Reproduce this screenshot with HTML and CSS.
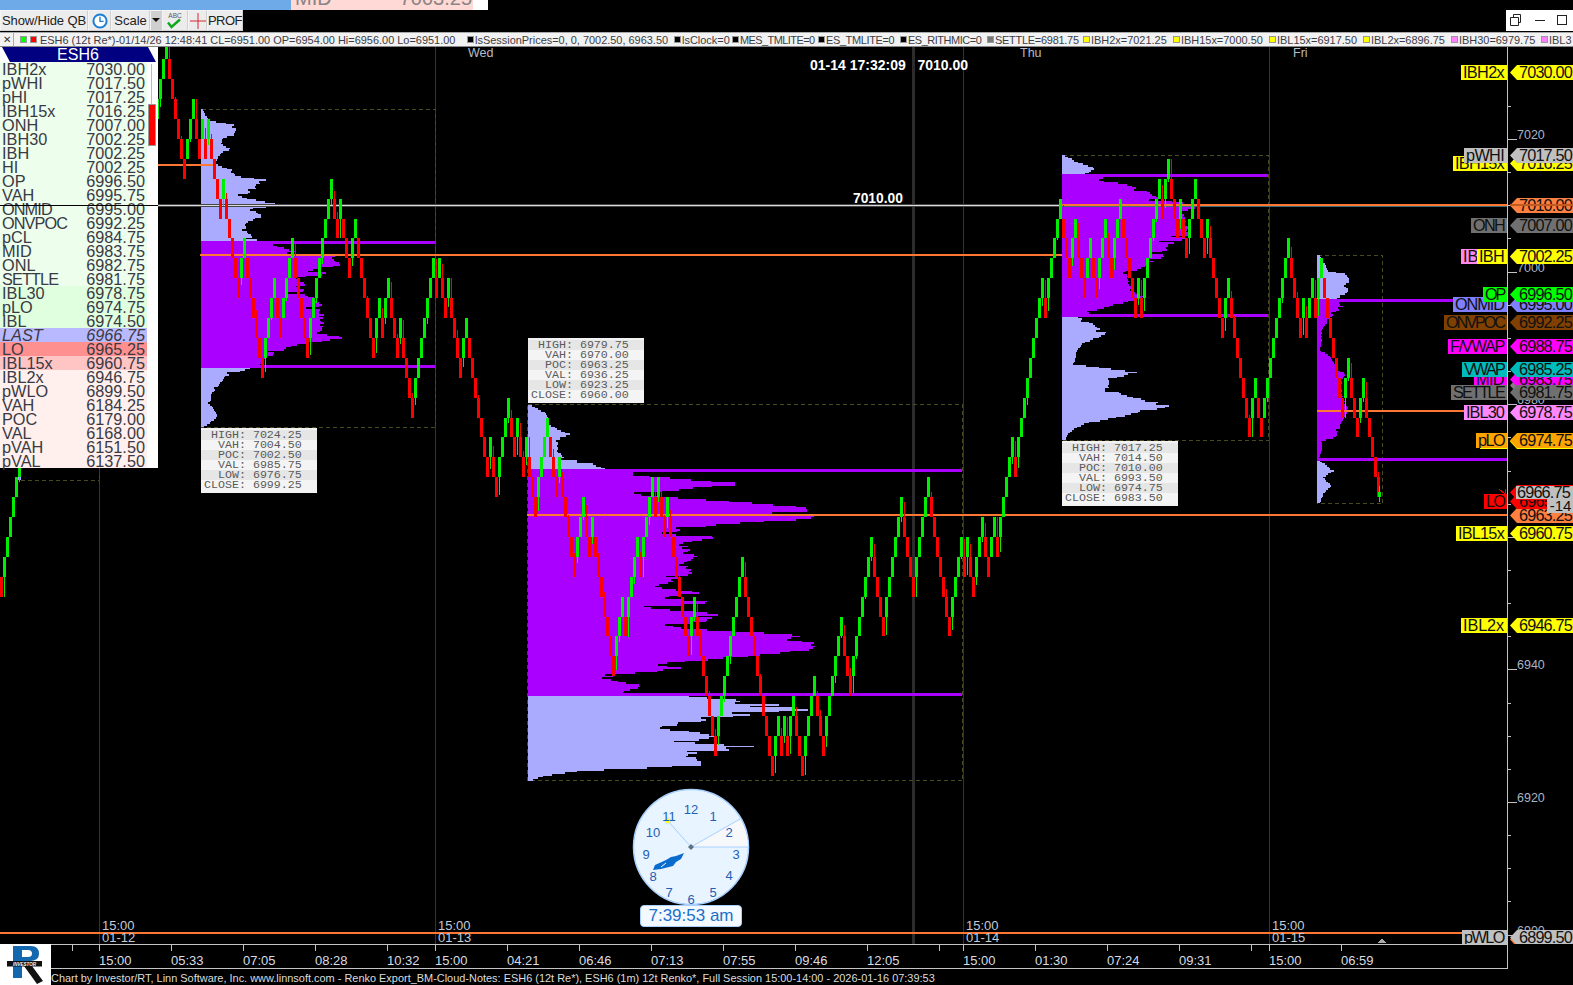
FILE: index.html
```html
<!DOCTYPE html>
<html lang="en">
<head>
<meta charset="utf-8">
<title>ESH6 Renko chart</title>
<link rel="stylesheet" href="styles.css">
</head>
<body>
<div class="page">
  <div class="top-strip">
    <div class="strip-blue"></div>
    <div class="strip-quote"><span>MID</span><span>7003.25</span></div>
    <div class="strip-end"></div>
  </div>
  <div class="toolbar-row">
    <div class="toolbar">
      <button class="tb tb-show">Show/Hide QB</button>
      <button class="tb tb-clock" aria-label="clock">
        <svg width="16" height="16" viewBox="0 0 16 16"><circle cx="8" cy="8" r="6.600" fill="#fff" stroke="#1c7fd6" stroke-width="2"/><path d="M8 3.800V8.400H11.600" fill="none" stroke="#1c7fd6" stroke-width="1.400"/></svg>
      </button>
      <button class="tb tb-scale">Scale</button>
      <button class="tb tb-drop" aria-label="scale menu"><svg width="8" height="5" viewBox="0 0 8 5"><path d="M0 0H8L4 4Z" fill="#111"/></svg></button>
      <button class="tb tb-abc" aria-label="ABC"><svg width="18" height="18" viewBox="0 0 18 18"><text x="9" y="6" class="abc-text">ABC</text><path d="M2 10.500L5.500 15L14 7.500" fill="none" stroke="#0fa81a" stroke-width="2.400"/></svg></button>
      <button class="tb tb-cross" aria-label="cross"><svg width="16" height="16" viewBox="0 0 16 16"><path d="M0 8H16M8 0V16" stroke="#d8262c" stroke-width="1"/></svg></button>
      <button class="tb tb-prof">PROF</button>
    </div>
    <div class="win-buttons">
      <svg width="67" height="21" viewBox="0 0 67 21"><path d="M4.500 7.500H12.500V15.500H4.500ZM7.500 7.500V4.500H14.500V12.500H12.500" fill="none" stroke="#222"/><path d="M29 10.500H39" stroke="#222"/><rect x="51.500" y="5.500" width="9" height="9" fill="none" stroke="#222"/></svg>
    </div>
  </div>
  <div class="info-bar" id="infoBar">
    <span class="close-x">✕</span>
    <span class="sw sw-green"></span><span class="sw sw-red"></span>
    <span class="it it-main">ESH6 (12t Re*)-01/14/26 12:48:41 CL=6951.00 OP=6954.00 Hi=6956.00 Lo=6951.00</span>
    <span class="sw sw-black"></span><span class="it it-a">lsSessionPrices=0, 0, 7002.50, 6963.50</span>
    <span class="sw sw-black"></span><span class="it it-b">lsClock=0</span>
    <span class="sw sw-black"></span><span class="it it-c">MES_TMLITE=0</span>
    <span class="sw sw-black"></span><span class="it it-d">ES_TMLITE=0</span>
    <span class="sw sw-black"></span><span class="it it-e">ES_RITHMIC=0</span>
    <span class="sw sw-gray"></span><span class="it it-f">SETTLE=6981.75</span>
    <span class="sw sw-yellow"></span><span class="it it-g">IBH2x=7021.25</span>
    <span class="sw sw-yellow"></span><span class="it it-h">IBH15x=7000.50</span>
    <span class="sw sw-yellow"></span><span class="it it-i">IBL15x=6917.50</span>
    <span class="sw sw-yellow"></span><span class="it it-j">IBL2x=6896.75</span>
    <span class="sw sw-pink"></span><span class="it it-k">IBH30=6979.75</span>
    <span class="sw sw-pink"></span><span class="it">IBL3</span>
  </div>

  <div class="main">
    <div class="chart" id="chartBox">
      <svg class="chart-svg" id="chart" width="1507" height="897" viewBox="0 47 1507 897"></svg>

      <div class="panel">
        <div class="panel-title">ESH6</div>
        <div class="panel-body">
          <div class="rows">
            <div class="row r-a"><span>IBH2x</span><span>7030.00</span></div>
            <div class="row r-a"><span>pWHI</span><span>7017.50</span></div>
            <div class="row r-a"><span>pHI</span><span>7017.25</span></div>
            <div class="row r-a"><span>IBH15x</span><span>7016.25</span></div>
            <div class="row r-a"><span>ONH</span><span>7007.00</span></div>
            <div class="row r-a"><span>IBH30</span><span>7002.25</span></div>
            <div class="row r-a"><span>IBH</span><span>7002.25</span></div>
            <div class="row r-a"><span>HI</span><span>7002.25</span></div>
            <div class="row r-a"><span>OP</span><span>6996.50</span></div>
            <div class="row r-a"><span>VAH</span><span>6995.75</span></div>
            <div class="row r-a"><span class="tight">ONMID</span><span>6995.00</span></div>
            <div class="row r-a"><span class="tight">ONVPOC</span><span>6992.25</span></div>
            <div class="row r-a"><span>pCL</span><span>6984.75</span></div>
            <div class="row r-a"><span>MID</span><span>6983.75</span></div>
            <div class="row r-a"><span>ONL</span><span>6982.75</span></div>
            <div class="row r-a"><span class="tight">SETTLE</span><span>6981.75</span></div>
            <div class="row r-b"><span>IBL30</span><span>6978.75</span></div>
            <div class="row r-b"><span>pLO</span><span>6974.75</span></div>
            <div class="row r-b"><span>IBL</span><span>6974.50</span></div>
            <div class="row r-last"><span>LAST</span><span>6966.75</span></div>
            <div class="row r-lo"><span>LO</span><span>6965.25</span></div>
            <div class="row r-i15"><span>IBL15x</span><span>6960.75</span></div>
            <div class="row r-c"><span>IBL2x</span><span>6946.75</span></div>
            <div class="row r-c"><span>pWLO</span><span>6899.50</span></div>
            <div class="row r-c"><span>VAH</span><span>6184.25</span></div>
            <div class="row r-c"><span>POC</span><span>6179.00</span></div>
            <div class="row r-c"><span>VAL</span><span>6168.00</span></div>
            <div class="row r-c"><span>pVAH</span><span>6151.50</span></div>
            <div class="row r-c"><span>pVAL</span><span>6137.50</span></div>
          </div>
          <div class="range-col"><div class="range-line"></div><div class="range-bar"></div></div>
        </div>
        <div class="panel-strike"></div>
      </div>

      <div class="stat-box box-a">
        <div> HIGH: 7024.25</div><div>  VAH: 7004.50</div><div>  POC: 7002.50</div><div>  VAL: 6985.75</div><div>  LOW: 6976.75</div><div>CLOSE: 6999.25</div>
      </div>
      <div class="stat-box box-b">
        <div> HIGH: 6979.75</div><div>  VAH: 6970.00</div><div>  POC: 6963.25</div><div>  VAL: 6936.25</div><div>  LOW: 6923.25</div><div>CLOSE: 6960.00</div>
      </div>
      <div class="stat-box box-c">
        <div> HIGH: 7017.25</div><div>  VAH: 7014.50</div><div>  POC: 7010.00</div><div>  VAL: 6993.50</div><div>  LOW: 6974.75</div><div>CLOSE: 6983.50</div>
      </div>

      <div class="day day-wed">Wed</div>
      <div class="day day-thu">Thu</div>
      <div class="day day-fri">Fri</div>
      <div class="cursor-label">01-14 17:32:09&nbsp;&nbsp;&nbsp;7010.00</div>
      <div class="line-label">7010.00</div>

      <div class="clock">
        <svg width="120" height="120" viewBox="0 0 120 120">
          <circle cx="60" cy="60" r="57.500" fill="#e8f4ff" stroke="#a8d0ff" stroke-width="1.500"/>
          <path d="M60 60L109 32A57 57 0 0 1 117 60Z" fill="#f7f8f9"/>
          <path d="M60 60H117.500M60 60L109 32M60 60L37 34" stroke="#a8d0ff" stroke-width="1" fill="none"/>
          <circle cx="37" cy="34" r="3" fill="#ffff33" stroke="#cfe4ff"/>
          <g class="clock-nums">
            <text x="60" y="27">12</text><text x="82" y="34">1</text><text x="98" y="50">2</text><text x="105" y="72">3</text>
            <text x="98" y="93">4</text><text x="82" y="110">5</text><text x="60" y="117">6</text><text x="38" y="110">7</text>
            <text x="22" y="94">8</text><text x="15" y="72">9</text><text x="22" y="50">10</text><text x="38" y="34">11</text>
          </g>
          <path d="M53 66L45 69L40 70L35 73L24 78L22 83L30 82L38 80L42 79L45 75L50 72Z" fill="#0a6ccc"/>
          <path d="M30 80L35 76" stroke="#fff" stroke-width="1"/>
          <path d="M60 57L63 60L60 63L57 60Z" fill="#5b7288"/>
        </svg>
        <div class="clock-time">7:39:53 am</div>
      </div>
    </div>
    <div class="axis" id="axis"></div>
  </div>

  <div class="bottom">
    <div class="logo">
      <svg width="51" height="40" viewBox="0 0 51 40">
        <path fill-rule="evenodd" d="M13 1H31Q39 1 39 9Q39 15 31 16H22V33H13ZM22 5V12H28Q32 12 32 8.500Q32 5 28 5Z" fill="#1468b0"/>
        <path d="M24 21H32L43 36L37 39Z" fill="#111"/>
        <rect x="7" y="16" width="35" height="5.500" fill="#111"/>
        <text x="24.500" y="20.500" class="logo-text">INVESTOR</text>
      </svg>
    </div>
    <div class="bottom-main">
      <div class="time-axis" id="timeAxis"></div>
      <div class="footer-text">Chart by Investor/RT, Linn Software, Inc. www.linnsoft.com - Renko Export_BM-Cloud-Notes: ESH6 (12t Re*), ESH6 (1m) 12t Renko*, Full Session 15:00-14:00 - 2026-01-16 07:39:53</div>
    </div>
  </div>
</div>
<script src="chart.js"></script>
</body>
</html>
```
FILE: styles.css
```css
* { box-sizing: border-box; }
html, body { margin: 0; padding: 0; background: #000; }
body { font-family: "Liberation Sans", Arial, sans-serif; }
.page { width: 1573px; height: 985px; overflow: hidden; background: #000; position: relative; }

/* top strip */
.top-strip { height: 10px; display: flex; overflow: hidden; }
.strip-blue { width: 291px; background: #6ea9e8; }
.strip-quote { width: 182px; background: #ffd9d6; color: #8a8484; font-size: 20px; line-height: 20px; display: flex; justify-content: space-between; padding: 0 1px 0 4px; }
.strip-quote span { display: block; margin-top: -12px; }
.strip-end { width: 15px; background: #fff; }

/* toolbar */
.toolbar-row { height: 22px; display: flex; justify-content: space-between; align-items: flex-start; }
.toolbar { height: 21px; display: flex; background: #e4e4e4; }
.tb { height: 21px; padding: 0; margin: 0; border: 1px solid #d0d0d0; border-top-color: #f4f4f4; border-left-color: #f4f4f4; background: #ececec; font: 13px "Liberation Sans", Arial, sans-serif; color: #222; display: flex; align-items: center; justify-content: center; white-space: nowrap; }
.tb-show { width: 88px; letter-spacing: -.1px; }
.tb-clock { width: 23px; }
.tb-scale { width: 39px; }
.tb-drop { width: 12px; background: #cfcfcf; }
.tb-abc { width: 26px; }
.tb-cross { width: 19px; }
.tb-prof { width: 36px; letter-spacing: -.5px; }
.abc-text { font: 6.500px "Liberation Sans", sans-serif; fill: #555; text-anchor: middle; }
.win-buttons { width: 67px; height: 21px; background: #fff; }
.win-buttons svg { display: block; }

/* info bar */
.info-bar { height: 15px; background: #f2f2f2; border-top: 1px solid #aaa; border-bottom: 1px solid #888; display: flex; align-items: center; white-space: nowrap; overflow: hidden; font-size: 10.950px; color: #3c3c46; line-height: 13px; }
.close-x { width: 14px; height: 13px; font-size: 10px; line-height: 13px; text-align: center; color: #333; border-right: 1px solid #aaa; margin-right: 6px; flex: none; }
.sw { width: 7px; height: 7px; flex: none; margin-right: 1px; border: 1px solid #999; }
.sw-green { background: #0f0; margin-right: 3px; }
.sw-red { background: #f00; margin-right: 3px; }
.sw-black { background: #000; }
.sw-gray { background: #777; }
.sw-yellow { background: #ff0; }
.sw-pink { background: #ff80ff; }
.it { flex: none; position: relative; top: 1px; }
.it-main { width: 427px; }
.it-a { width: 199px; }
.it-b { width: 50px; }
.it-c { width: 78px; letter-spacing: -.55px; }
.it-d { width: 74px; letter-spacing: -.35px; }
.it-e { width: 79px; letter-spacing: -.45px; }
.it-f { width: 88px; letter-spacing: -.25px; }
.it-g { width: 82px; }
.it-h { width: 88px; }
.it-i { width: 86px; }
.it-j { width: 80px; }
.it-k { width: 82px; }

/* main */
.main { height: 897px; display: flex; }
.chart { width: 1507px; height: 897px; position: relative; overflow: hidden; background: #000; }
.chart-svg { position: absolute; left: 0; top: 0; shape-rendering: crispEdges; }
.axis { width: 66px; height: 897px; position: relative; overflow: hidden; border-left: 1px solid #c4c4c4; }

/* quote board */
.panel { position: absolute; left: 0; top: 0; width: 158px; height: 421px; background: #fff; color: #3a3a44; }
.panel-title { height: 15px; background: #000080; color: #fff; font-size: 16px; line-height: 16px; text-align: center; clip-path: polygon(2px 0, 148px 0, 156px 100%, 10px 100%); padding-right: 2px; }
.panel-body { display: flex; }
.rows { width: 147px; }
.row { height: 14px; line-height: 14px; font-size: 16.300px; display: flex; justify-content: space-between; padding: 0 2px 0 2px; white-space: nowrap; }
.tight { letter-spacing: -.9px; }
.r-a { background: #edfeed; }
.r-b { background: #dfffdf; }
.r-last { background: #b9b9ff; font-style: italic; }
.r-lo { background: #ff9090; }
.r-i15 { background: #ffc4c4; }
.r-c { background: #fff0ee; }
.range-col { width: 11px; position: relative; }
.range-line { position: absolute; left: 4px; top: 2px; width: 1px; height: 82px; background: #bbb; }
.range-bar { position: absolute; left: 2px; top: 43px; width: 6px; height: 40px; background: #f00; outline: 1px solid #999; }
.panel-strike { position: absolute; left: 0; top: 158px; width: 158px; height: 1px; background: #000; }

/* stats boxes */
.stat-box { position: absolute; width: 116px; height: 65px; background: #f2f2f2; font: 11.650px/10px "Liberation Mono", monospace; color: #5a5a5a; padding-top: 2px; }
.stat-box div { height: 10px; background: #f4f4f4; white-space: pre; padding-left: 3px; }
.stat-box div:nth-child(odd) { background: #e6e6e6; }
.box-a { left: 201px; top: 381px; }
.box-b { left: 528px; top: 291px; }
.box-c { left: 1062px; top: 394px; }

.day { position: absolute; top: 0; font-size: 12.500px; line-height: 12px; color: #b5bdc9; }
.day-wed { left: 468px; }
.day-thu { left: 1020px; }
.day-fri { left: 1293px; }
.cursor-label { position: absolute; left: 810px; top: 11px; font-size: 14px; font-weight: bold; line-height: 15px; color: #fff; white-space: nowrap; }
.line-label { position: absolute; left: 853px; top: 145px; font-size: 13.800px; font-weight: bold; line-height: 14px; color: #fff; }

.date-mark { position: absolute; font-size: 13px; line-height: 12px; color: #c2ccd8; white-space: pre; }

/* clock */
.clock { position: absolute; left: 631px; top: 740px; width: 120px; height: 141px; }
.clock svg { display: block; }
.clock-nums text { font: 13px "Liberation Sans", sans-serif; fill: #1f60b4; text-anchor: middle; }
.clock-time { position: absolute; left: 9px; top: 118px; width: 102px; height: 22px; background: #f4f9ff; border: 1px solid #a8d0ff; border-radius: 4px; color: #1a70c8; font-size: 17px; line-height: 20px; text-align: center; white-space: nowrap; }

/* price axis */
.tick { position: absolute; left: 0; height: 1px; background: #c4c4c4; }
.tick-s { width: 3px; }
.tick-l { width: 9px; }
.axis-num { position: absolute; left: 9px; font-size: 12.500px; line-height: 12px; color: #a8b4c6; }
.name-tag { position: absolute; height: 15px; line-height: 15px; font-size: 16.300px; padding: 0 3px 0 2px; color: #111; white-space: nowrap; overflow: hidden; }
.price-tag { position: absolute; left: 2px; width: 64px; height: 15px; line-height: 15px; font-size: 16.300px; letter-spacing: -.85px; padding-left: 9px; color: #111; white-space: nowrap; clip-path: polygon(0 50%, 7px 0, 100% 0, 100% 100%, 7px 100%); }
.strike { position: absolute; left: 2px; width: 64px; top: 157px; height: 2px; background: #c05a20; }
.last-box { position: absolute; left: 8px; width: 58px; top: 439px; height: 13px; background: #c0c0c0; color: #111; font-size: 16.300px; line-height: 13px; letter-spacing: -.85px; padding-left: 1px; white-space: nowrap; }
.diff-box { position: absolute; left: 39px; width: 27px; top: 452px; height: 14px; background: #c0c0c0; color: #111; font-size: 15px; line-height: 14px; text-align: center; }

/* bottom */
.bottom { height: 41px; display: flex; }
.logo { width: 51px; height: 41px; background: #fff; padding-top: 1px; }
.logo svg { display: block; }
.logo-text { font: italic bold 4.500px "Liberation Sans", sans-serif; fill: #fff; text-anchor: middle; }
.bottom-main { width: 1457px; }
.time-axis { height: 25px; position: relative; border-top: 1px solid #c4c4c4; border-bottom: 1px solid #c4c4c4; border-right: 1px solid #c4c4c4; }
.t-tick { position: absolute; top: 0; width: 1px; height: 6px; background: #c4c4c4; }
.t-num { position: absolute; top: 9px; font-size: 13px; line-height: 13px; color: #d8dde4; }
.footer-text { height: 16px; font-size: 10.950px; line-height: 16px; padding-top: 1px; color: #dcdcdc; white-space: nowrap; }
```
FILE: chart.js
```js
(function () {
  var svg = document.getElementById('chart');
  var chartBox = document.getElementById('chartBox');
  var axis = document.getElementById('axis');
  var timeAxis = document.getElementById('timeAxis');
  var out = [];

  function rect(x, y, w, h, fill) {
    out.push('<rect x="' + x + '" y="' + y + '" width="' + w + '" height="' + h + '" fill="' + fill + '"/>');
  }
  function rowY(k) { return Math.round(119 + 19.9 * k); }

  /* vertical session separators */
  [[99, 1, '#333'], [435, 1, '#333'], [963, 1, '#333'], [1269, 1, '#333'], [912, 3, '#2c2c2c']].forEach(function (v) {
    rect(v[0], 47, v[1], 897, v[2]);
  });

  /* dashed session frames */
  [[201, 109, 234, 318], [527, 404, 435, 376], [1062, 155, 206, 285], [1317, 255, 65, 248], [20, 480, 79, 120]].forEach(function (b, i) {
    var x = b[0] + .5, y = b[1] + .5, w = b[2], h = b[3];
    var d = i === 4 ? 'M' + x + ' ' + y + 'H' + (x + w) + 'M' + (x + w) + ' ' + (y - 6) + 'V' + (y + 2)
                    : 'M' + x + ' ' + y + 'h' + w + 'v' + h + 'h' + (-w) + 'z';
    out.push('<path d="' + d + '" fill="none" stroke="#4a4a1e" stroke-dasharray="4 3"/>');
  });

  /* volume profiles: anchors are [y, rightEdge] in a 3x grid from the origin ox, oy */
  var seed = 12345;
  function rnd() { seed = (seed * 1103515245 + 12345) & 0x7fffffff; return seed / 0x7fffffff; }
  function profile(ox, oy, left, anchors, color) {
    var d = '';
    for (var z = anchors[0][0]; z < anchors[anchors.length - 1][0]; z += 5) {
      var i = 0;
      while (i < anchors.length - 2 && anchors[i + 1][0] <= z) i++;
      var a = anchors[i], b = anchors[i + 1];
      var wz = a[1] + (b[1] - a[1]) * (z - a[0]) / (b[0] - a[0]);
      var right = ox + wz / 3;
      var full = right - left;
      var n = rnd();
      var cut = n < .2 ? rnd() * .22 : rnd() * .05;
      var xe = Math.round(left + full * (1 - cut));
      var y = Math.round(oy + z / 3);
      var y2 = Math.round(oy + (z + 5) / 3);
      if (y2 > y) d += 'M' + left + ' ' + y + 'H' + xe + 'V' + y2 + 'H' + left + 'Z';
    }
    out.push('<path d="' + d + '" fill="' + color + '"/>');
  }
  var LAV = '#aaaaff', PUR = '#aa00ff';
  profile(190, 100, 201, [[28,40],[60,60],[72,136],[90,142],[105,130],[112,100],[130,95],[145,125],[155,95],[170,85],[190,75],[210,135],[225,135],[240,250],[250,205],[265,200],[290,160],[300,215],[312,282],[325,180],[345,225],[365,170],[385,170],[410,190],[422,205]], LAV);
  profile(190, 100, 201, [[422,225],[440,280],[455,330],[465,440],[480,450],[495,465],[505,360],[520,430],[530,320],[548,350],[570,340],[600,395],[630,405],[665,405],[695,400],[712,472],[720,410],[735,310],[750,280],[770,230],[790,215],[802,220]], PUR);
  profile(190, 100, 201, [[802,185],[815,140],[825,110],[850,90],[880,65],[910,60],[945,85],[960,70],[980,40]], LAV);

  profile(520, 330, 528, [[225,35],[245,75],[260,85],[275,80],[295,115],[312,155],[320,125],[340,115],[360,115],[385,140],[395,205],[417,265]], LAV);
  profile(520, 330, 528, [[417,340],[432,350],[445,490],[460,685],[475,500],[490,340],[505,530],[520,740],[530,900],[545,900],[555,930],[565,870],[580,610],[600,480],[610,530],[620,600],[640,495],[660,520],[680,540],[700,490],[725,550],[745,480],[770,410],[785,565],[800,430],[815,600],[830,390],[850,610],[870,570],[890,460],[905,700],[915,880],[925,830],[940,900],[955,895],[965,810],[985,600],[1000,420],[1015,500],[1030,310],[1045,265],[1065,380],[1085,310],[1097,330]], PUR);
  profile(520, 330, 528, [[1097,510],[1115,790],[1135,890],[1150,710],[1170,560],[1190,420],[1215,600],[1235,510],[1250,760],[1270,500],[1290,555],[1305,550],[1320,190],[1335,75],[1350,35]], LAV);

  profile(1050, 150, 1062, [[15,45],[35,85],[52,140],[72,105]], LAV);
  profile(1050, 150, 1062, [[72,140],[90,175],[100,230],[120,290],[140,330],[170,460],[185,400],[200,405],[225,420],[260,430],[280,365],[300,350],[320,350],[335,310],[350,280],[370,240],[395,240],[420,250],[440,290],[460,210],[480,130],[500,105]], PUR);
  profile(1050, 150, 1062, [[500,85],[520,130],[550,180],[575,105],[600,80],[620,80],[640,70],[650,150],[665,265],[685,180],[715,180],[735,235],[750,300],[765,380],[780,300],[795,225],[815,130],[830,80],[850,55],[870,45]], LAV);

  profile(1280, 240, 1317, [[45,120],[90,145],[100,195],[120,218],[135,195],[150,210],[165,190],[177,170]], LAV);
  profile(1280, 240, 1317, [[177,190],[200,190],[215,165],[240,145],[270,125],[300,125],[330,120],[345,150],[370,165],[400,195],[430,185],[470,190],[505,205],[530,195],[560,180],[590,170],[600,125],[630,125],[658,115]], PUR);
  profile(1280, 240, 1317, [[660,120],[690,162],[710,130],[735,155],[760,130],[790,118]], LAV);

  /* value-area lines */
  [[201, 435, 241], [201, 435, 365], [528, 962, 469], [528, 962, 693], [1062, 1268, 174], [1062, 1268, 314], [1317, 1507, 299], [1317, 1507, 458]].forEach(function (l) {
    rect(l[0], l[2], l[1] - l[0], 3, PUR);
  });

  /* POC and key-level lines */
  rect(0, 204, 1507, 3, '#444');
  rect(0, 205, 1062, 1, '#dcdcdc');
  rect(1062, 206, 445, 1, '#3f6a7a');
  rect(1062, 204, 445, 2, '#ff7733');
  [[200, 1062, 254], [527, 1507, 514], [1317, 1507, 410], [158, 213, 164], [0, 1507, 932]].forEach(function (l) {
    rect(l[0], l[2], l[1] - l[0], 2, '#ff7733');
  });
  rect(18, 477, 3, 3, LAV);

  /* renko bricks: each bar moves one row, pivots are the turning rows */
  function bars(startCol, startRow, firstRed, pivots) {
    var col = startCol, row = startRow, list = [[col, row, firstRed]];
    pivots.forEach(function (p) {
      while (row !== p) {
        var down = p > row;
        row += down ? 1 : -1;
        col++;
        list.push([col, row, down]);
      }
    });
    return list;
  }
  var all = bars(0, 23, true, [17]).concat(bars(52, -1, false, [
    -4, 2, -1, 1, 0, 1, 0, 4, 3, 8, 6, 12, 8, 10, 6, 11, 3, 5, 4, 7, 5, 11, 9, 10, 8, 11, 10, 14, 7, 8, 7, 9, 8, 12, 10,
    17, 16, 18, 14, 16, 15, 17, 16, 19, 15, 18, 17, 22, 19, 21, 20, 27, 24, 25, 21, 22, 18, 19, 18, 20, 19, 26, 24, 31,
    22, 32, 30, 31, 30, 31, 29, 32, 28, 31, 25, 28, 21, 25, 19, 23, 18, 25, 21, 22, 21, 23, 20, 22, 20, 21, 16, 17, 8,
    9, 4, 7, 5, 8, 6, 8, 5, 7, 4, 9, 8, 9, 3, 4, 2, 5, 4, 6, 3, 6, 5, 10, 8, 15, 13, 15, 6, 10, 9, 10, 8, 9, 7, 14, 12,
    15, 13, 18
  ]));
  var GREEN = '#00ee00', RED = '#ff0000';
  /* wicks belong mostly to bars that reverse direction */
  var wicks = [];
  var bodies = [];
  all.forEach(function (b, i) {
    var col = b[0], top = rowY(b[1]), bottom = rowY(b[1] + 1), x = col * 3, c = b[2] ? RED : GREEN;
    var prev = all[i - 1];
    var reversal = prev && prev[2] !== b[2];
    var h = (col * 2654435761 >>> 7) % 100;
    var len = reversal ? (h < 12 ? 0 : 5 + h % 16) : (h < 78 ? 0 : 2 + h % 7);
    if (len) {
      if (b[2]) wicks.push([x + 1, top - len, 1, len, c]);
      else wicks.push([x + 1, bottom, 1, len, c]);
    }
    bodies.push([x, top, 3, bottom - top, c]);
  });
  wicks.forEach(function (r) { rect.apply(null, r); });
  bodies.forEach(function (r) { rect.apply(null, r); });
  rect(1378, 492, 3, 5, GREEN);
  rect(1379, 486, 1, 16, GREEN);

  /* small last-price marker and end-of-data triangle */
  out.push('<path d="M1499 489L1505 494M1505 489V495H1500" stroke="#f00" fill="none"/>');
  out.push('<path d="M1382 938L1386 943H1378Z" fill="#aaa"/>');

  svg.innerHTML = out.join('');

  /* date labels on the session separators */
  [[102, '15:00\n01-12'], [438, '15:00\n01-13'], [966, '15:00\n01-14'], [1272, '15:00\n01-15']].forEach(function (d) {
    var el = document.createElement('div');
    el.className = 'date-mark';
    el.textContent = d[1];
    el.style.left = d[0] + 'px';
    el.style.top = '873px';
    chartBox.appendChild(el);
  });

  /* price axis */
  function priceY(p) { return 139 + (7020 - p) * 6.63 - 47; }
  function add(parent, cls, text, left, top) {
    var el = document.createElement('div');
    el.className = cls;
    if (text) el.textContent = text;
    if (left !== null) el.style.left = left + 'px';
    el.style.top = Math.round(top) + 'px';
    parent.appendChild(el);
    return el;
  }
  for (var p = 7025; p >= 6900; p -= 5) {
    var major = p % 20 === 0;
    add(axis, 'tick ' + (major ? 'tick-l' : 'tick-s'), '', null, priceY(p));
    if (major) add(axis, 'axis-num', String(p), null, priceY(p) - 10);
  }

  /* name, price, colour, left edge of the name box, clip instead of fit, nudge */
  var tags = [
    ['IBH2x', 7030.00, '#ffff00', 1461], ['IBH15x', 7016.25, '#ffff00', 1453], ['pWHI', 7017.50, '#c0c0c0', 1464],
    ['', 7010.00, '#ff8040'], ['ONH', 7007.00, '#707070', 1471], ['IBH30', 7002.25, '#ff88ee', 1461, true], ['IBH', 7002.25, '#ffff00', 1477],
    ['ONMID', 6995.00, '#8080ff', 1453], ['OP', 6996.50, '#00ff00', 1483], ['ONVPOC', 6992.25, '#804000', 1444],
    ['F/VWAP', 6988.75, '#ff00ff', 1448], ['ONL', 6982.75, '#808080', 1477], ['MID', 6983.75, '#ff00ff', 1474],
    ['SETTLE', 6981.75, '#707070', 1451], ['VWAP', 6985.25, '#00bbbb', 1462], ['IBL30', 6978.75, '#ff88ff', 1464],
    ['IBL', 6974.50, '#ffff00', 1480, false, 1], ['pLO', 6974.75, '#ffa500', 1476, false, 1], ['', 6963.25, '#ff8040'],
    ['LO', 6965.25, '#ff0000', 1484], ['IBL15x', 6960.75, '#ffff00', 1456, false, 2], ['IBL2x', 6946.75, '#ffff00', 1461, false, 1],
    ['', 6899.25, '#ff8040'], ['pWLO', 6899.50, '#c0c0c0', 1462]
  ];
  tags.forEach(function (t) {
    var top = priceY(t[1]) - 7.5 + (t[5] || 0);
    var tag = add(axis, 'price-tag', t[1].toFixed(2), null, top);
    tag.style.background = t[2];
    if (t[0]) {
      var nm = add(chartBox, 'name-tag', t[0], t[3], top);
      nm.style.background = t[2];
      var target = 1507 - t[3];
      if (!t[4]) {
        var natural = nm.getBoundingClientRect().width;
        if (natural > target) nm.style.letterSpacing = ((target - natural) / t[0].length) + 'px';
      }
      nm.style.width = target + 'px';
    }
  });
  add(axis, 'strike', '', null, 157);
  var last = add(axis, 'price-tag', '', null, priceY(6966.75) - 7.5);
  last.style.background = '#ff0000';
  add(axis, 'last-box', '6966.75', null, 439);
  add(axis, 'diff-box', '-14', null, 452);

  /* time axis */
  [72, 99, 171, 243, 315, 387, 435, 507, 579, 651, 723, 795, 867, 939, 963, 1035, 1107, 1179, 1251, 1269, 1341].forEach(function (x) {
    add(timeAxis, 't-tick', '', x - 51, 0);
  });
  [[99, '15:00'], [171, '05:33'], [243, '07:05'], [315, '08:28'], [387, '10:32'], [435, '15:00'], [507, '04:21'], [579, '06:46'],
   [651, '07:13'], [723, '07:55'], [795, '09:46'], [867, '12:05'], [963, '15:00'], [1035, '01:30'], [1107, '07:24'], [1179, '09:31'],
   [1269, '15:00'], [1341, '06:59']].forEach(function (t) {
    add(timeAxis, 't-num', t[1], t[0] - 51, 9);
  });
})();
```
